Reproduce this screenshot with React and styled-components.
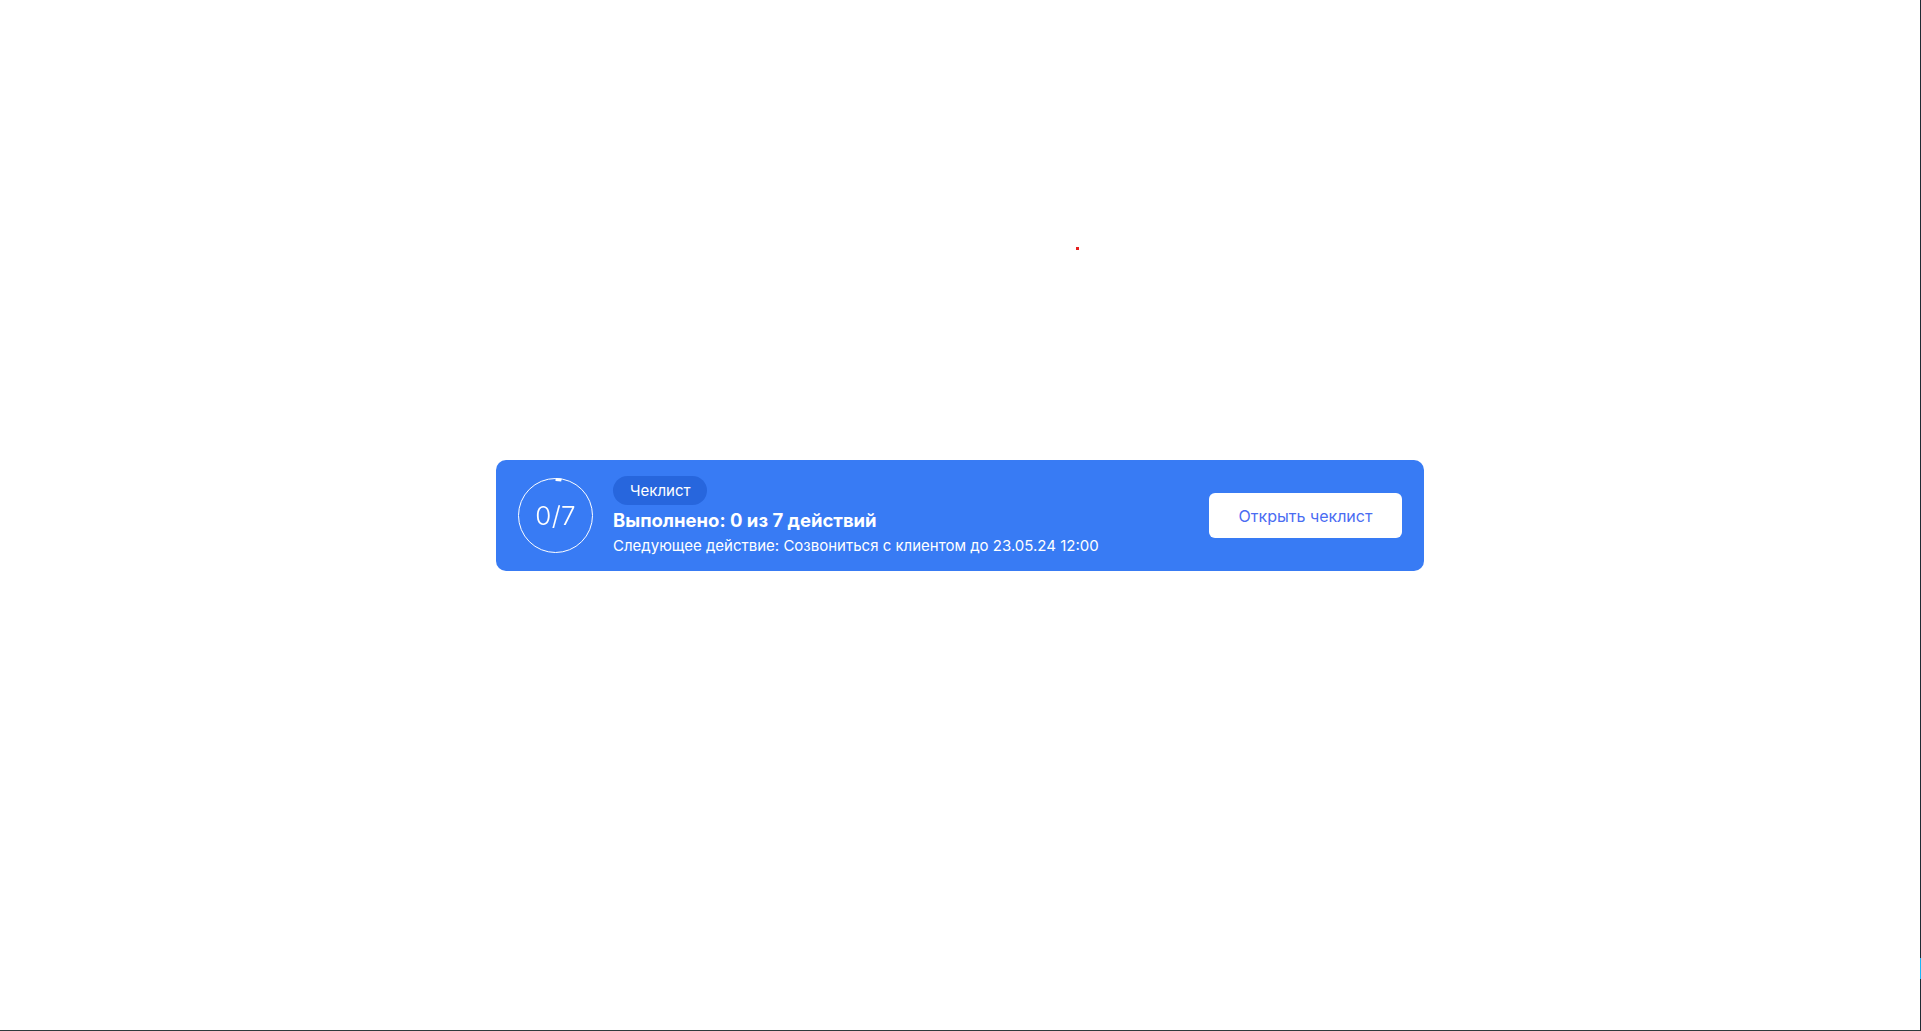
import React from "react";
import styled, { createGlobalStyle } from "styled-components";

const GlobalStyle = createGlobalStyle`
  html, body {
    margin: 0;
    padding: 0;
    background: #ffffff;
    font-family: Inter, "Noto Sans", "Liberation Sans", sans-serif;
  }
`;

const Page = styled.div`
  min-height: 100vh;
  display: flex;
  align-items: center;
  justify-content: center;
`;

const Frame = styled.div`
  position: fixed;
  inset: 0;
  pointer-events: none;
  border-right: 1px solid #1f2a33;
  border-bottom: 1px solid #2d3b3d;

  &::after {
    content: "";
    position: absolute;
    right: -1px;
    top: 958px;
    width: 1px;
    height: 21px;
    background: #19b5f5;
  }
`;

const Dot = styled.span`
  position: fixed;
  left: 1076px;
  top: 247px;
  width: 3px;
  height: 3px;
  background: #e5201f;
`;

const Banner = styled.div`
  box-sizing: border-box;
  width: 928px;
  height: 111px;
  margin-right: 1px;
  padding: 0 22px;
  background: #387bf4;
  border-radius: 10px;
  display: flex;
  align-items: center;
  color: #ffffff;
`;

const Progress = styled.div`
  position: relative;
  width: 75px;
  height: 75px;
  flex-shrink: 0;
  display: flex;
  align-items: center;
  justify-content: center;

  svg {
    position: absolute;
    inset: 0;
  }
`;

const Count = styled.span`
  font-size: 26px;
  font-weight: 300;
  line-height: 1;
  letter-spacing: 0.2px;
`;

const Info = styled.div`
  flex: 1;
  margin-left: 20px;
  display: flex;
  flex-direction: column;
  align-items: flex-start;
`;

const Chip = styled.span`
  box-sizing: border-box;
  height: 29px;
  padding: 0 17px;
  border-radius: 15px;
  background: #2766dd;
  font-size: 15px;
  font-weight: 400;
  display: flex;
  align-items: center;
`;

const Title = styled.div`
  margin-top: 3px;
  font-size: 18.5px;
  font-weight: 700;
  line-height: 24px;
`;

const Subtitle = styled.div`
  margin-top: 4px;
  font-size: 15px;
  font-weight: 400;
  line-height: 20px;
`;

const OpenButton = styled.button`
  width: 193px;
  height: 45px;
  border: none;
  border-radius: 6px;
  background: #ffffff;
  color: #4a6cf2;
  font-family: inherit;
  font-size: 16px;
  font-weight: 400;
  cursor: pointer;
`;

const ProgressRing = ({ done, total }) => {
  const r = 37;
  const c = 37.5;
  const angle = (Math.max(done, 0.3) / total) * 2 * Math.PI * 0.6;
  const x = c + r * Math.sin(angle);
  const y = c - r * Math.cos(angle);
  return (
    <Progress>
      <svg width="75" height="75" viewBox="0 0 75 75">
        <circle cx={c} cy={c} r={r} fill="none" stroke="#ffffff" strokeWidth="1" />
        <path
          d={`M ${c} ${c - r + 1} A ${r - 1} ${r - 1} 0 0 1 ${x} ${y + 1}`}
          fill="none"
          stroke="#ffffff"
          strokeWidth="3"
        />
      </svg>
      <Count>
        {done}/{total}
      </Count>
    </Progress>
  );
};

function App() {
  const done = 0;
  const total = 7;

  return (
    <Page>
      <GlobalStyle />
      <Frame />
      <Dot />
      <Banner>
        <ProgressRing done={done} total={total} />
        <Info>
          <Chip>Чеклист</Chip>
          <Title>
            Выполнено: {done} из {total} действий
          </Title>
          <Subtitle>Следующее действие: Созвониться с клиентом до 23.05.24 12:00</Subtitle>
        </Info>
        <OpenButton>Открыть чеклист</OpenButton>
      </Banner>
    </Page>
  );
}

export default App;
